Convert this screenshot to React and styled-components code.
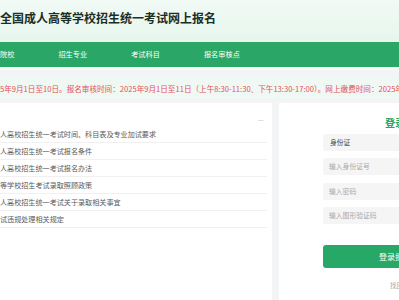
import React from 'react';
import styled, { createGlobalStyle } from 'styled-components';

const GlobalStyle = createGlobalStyle`
  html, body {
    margin: 0;
    padding: 0;
    width: 399px;
    height: 300px;
    overflow: hidden;
    background: #f3f4f5;
    font-family: "Noto Sans CJK SC", "Noto Sans", sans-serif;
  }
`;

const Page = styled.div`
  width: 399px;
  height: 300px;
  overflow: hidden;
  display: flex;
  flex-direction: column;
`;

const Header = styled.header`
  height: 42px;
  box-sizing: border-box;
  padding-top: 11px;
  background: linear-gradient(180deg, #f1faf5 0%, #e6f6ed 100%);
  white-space: nowrap;
`;

const Title = styled.h1`
  margin: 0;
  font-size: 12px;
  line-height: 14px;
  font-weight: 700;
  color: #1c2f25;
`;

const Nav = styled.nav`
  height: 25px;
  background: #2aa766;
  display: flex;
  align-items: center;
  gap: 44px;
  white-space: nowrap;
  border-bottom: 3px solid #f7f8f8;
`;

const NavItem = styled.a`
  color: #fff;
  font-size: 7.2px;
  line-height: 25px;
  text-decoration: none;
`;

const Notice = styled.div`
  margin-top: 8px;
  height: 21px;
  background: #f0f8f4;
  color: #e25157;
  font-size: 7.6px;
  line-height: 21px;
  white-space: nowrap;
  overflow: hidden;
`;

const Content = styled.main`
  margin-top: 4px;
  flex: 1;
  display: flex;
  gap: 7px;
`;

const NewsPanel = styled.section`
  width: 272px;
  flex-shrink: 0;
  background: #fff;
  box-sizing: border-box;
  padding: 8px 5px 0 0;
`;

const NewsHead = styled.div`
  height: 15px;
  display: flex;
  justify-content: flex-end;
  align-items: center;
  padding-right: 3px;
  color: #bbb;
  font-size: 7px;
`;

const NewsList = styled.ul`
  list-style: none;
  margin: 0;
  padding: 0;
`;

const NewsItem = styled.li`
  height: 17px;
  box-sizing: border-box;
  border-bottom: 1px solid #f0f0f0;
  font-size: 7.1px;
  line-height: 17px;
  color: #5a5a5a;
  white-space: nowrap;
`;

const LoginPanel = styled.section`
  flex: 1;
  background: #fff;
  padding-left: 44px;
  overflow: hidden;
`;

const Form = styled.div`
  width: 144px;
  display: flex;
  flex-direction: column;
`;

const LoginTitle = styled.h2`
  margin: 13px 0 0;
  text-align: center;
  font-size: 10px;
  line-height: 14px;
  font-weight: 700;
  color: #24a363;
`;

const Fields = styled.div`
  margin-top: 4px;
  display: flex;
  flex-direction: column;
  gap: 7.4px;
`;

const Field = styled.div`
  height: 17px;
  background: #f5f5f5;
  border-radius: 2px;
  padding-left: ${p => (p.$value ? '7px' : '6px')};
  font-size: 6.8px;
  line-height: 17px;
  color: ${p => (p.$value ? '#444' : '#a9a9a9')};
  white-space: nowrap;
`;

const Button = styled.button`
  margin-top: 21px;
  height: 23px;
  border: none;
  border-radius: 3px;
  background: #27a867;
  color: #fff;
  font-family: inherit;
  font-size: 8px;
  padding: 0;
`;

const Links = styled.div`
  margin-top: 12px;
  padding-left: 67px;
  font-size: 6.5px;
  color: #aaa;
  white-space: nowrap;
`;

const news = [
  '人高校招生统一考试时间、科目表及专业加试要求',
  '人高校招生统一考试报名条件',
  '人高校招生统一考试报名办法',
  '等学校招生考试录取照顾政策',
  '人高校招生统一考试关于录取相关事宜',
  '试违规处理相关规定'
];

const navItems = ['院校', '招生专业', '考试科目', '报名审核点'];

const App = () => {
  return (
    <Page>
      <GlobalStyle />
      <Header>
        <Title>全国成人高等学校招生统一考试网上报名</Title>
      </Header>
      <Nav>
        {navItems.map(item => (
          <NavItem key={item}>{item}</NavItem>
        ))}
      </Nav>
      <Notice>
        5年9月1日至10日。报名审核时间：2025年9月1日至11日（上午8:30-11:30、下午13:30-17:00）。网上缴费时间：2025年9月1日至12日。
      </Notice>
      <Content>
        <NewsPanel>
          <NewsHead>—</NewsHead>
          <NewsList>
            {news.map(text => (
              <NewsItem key={text}>{text}</NewsItem>
            ))}
          </NewsList>
        </NewsPanel>
        <LoginPanel>
          <Form>
            <LoginTitle>登录</LoginTitle>
            <Fields>
              <Field $value>身份证</Field>
              <Field>输入身份证号</Field>
              <Field>输入密码</Field>
              <Field>输入图形验证码</Field>
            </Fields>
            <Button>登录报名</Button>
            <Links>找回密码</Links>
          </Form>
        </LoginPanel>
      </Content>
    </Page>
  );
};

export default App;
